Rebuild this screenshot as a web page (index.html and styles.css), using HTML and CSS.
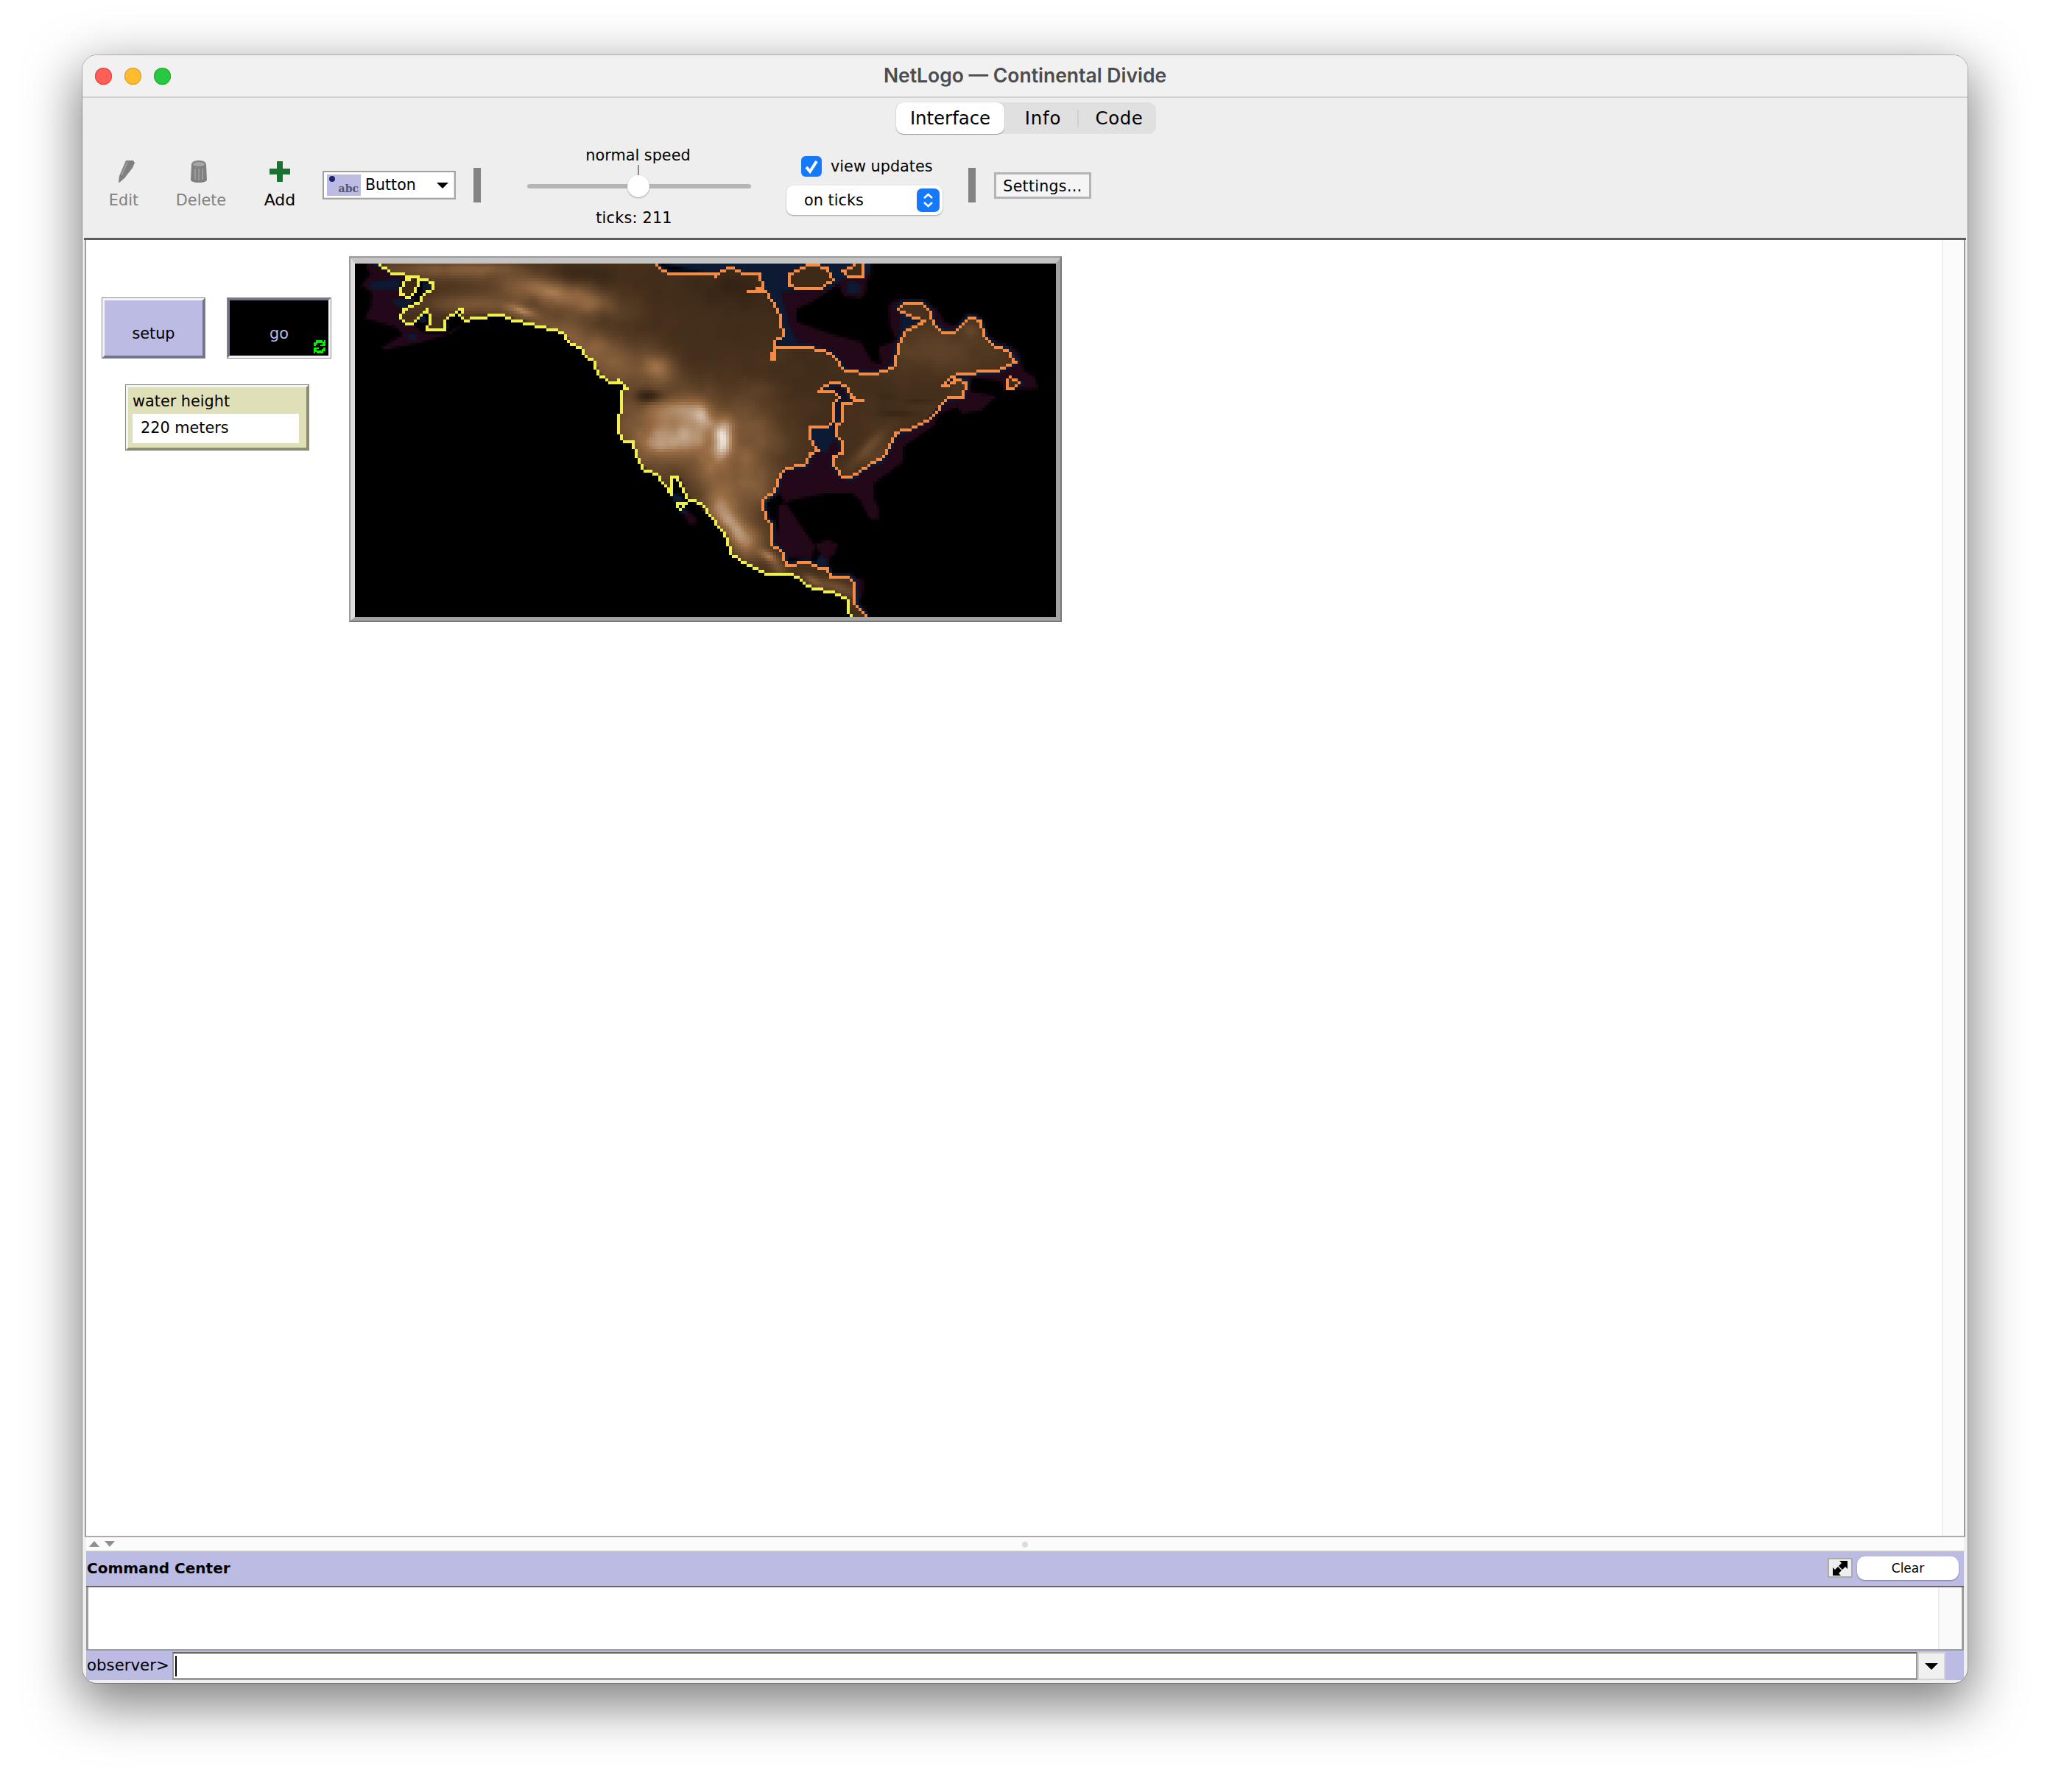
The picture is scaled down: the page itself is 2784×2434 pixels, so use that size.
FILE: index.html
```html
<!DOCTYPE html>
<html lang="en">
<head>
<meta charset="utf-8">
<title>NetLogo — Continental Divide</title>
<link rel="stylesheet" href="styles.css">
</head>
<body>
<div class="window">
  <header class="titlebar">
    <div class="lights"><i class="light red"></i><i class="light yellow"></i><i class="light green"></i></div>
    <div class="title">NetLogo — Continental Divide</div>
  </header>
  <section class="toolbar">
    <div class="tabs">
      <div class="tab active">Interface</div>
      <div class="tab info">Info</div>
      <div class="tab-div"></div>
      <div class="tab code">Code</div>
    </div>
    <div class="tools">
      <div class="tool tool-edit disabled">
        <svg class="tool-icon" width="30" height="31" viewBox="0 0 30 31"><path d="M16 1h10l2 3-3 7-11 14-7 6H6l1-9z" fill="#808080"/><path d="M18 3l-8 18" stroke="#9b9b9b" stroke-width="2" fill="none"/></svg>
        <span class="tool-label">Edit</span>
      </div>
      <div class="tool tool-delete disabled">
        <svg class="tool-icon" width="30" height="31" viewBox="0 0 30 31"><path d="M5 7c0-4 4-6 10-6s10 2 10 6l1 20c0 2-3 4-11 4S4 29 4 27z" fill="#808080"/><ellipse cx="15" cy="6" rx="8" ry="3" fill="#a5a5a5"/><path d="M10 12v15M15 12v16M20 12v15" stroke="#9a9a9a" stroke-width="2"/></svg>
        <span class="tool-label">Delete</span>
      </div>
      <div class="tool tool-add">
        <svg class="tool-icon" width="30" height="31" viewBox="0 0 30 31"><path d="M11 2h8v10h10v8H19v10h-8V20H1v-8h10z" fill="#1b7331"/></svg>
        <span class="tool-label">Add</span>
      </div>
      <div class="widget-select">
        <div class="widget-icon"><i class="widget-dot"></i><span>abc</span></div>
        <span class="widget-name">Button</span>
        <i class="down-arrow"></i>
      </div>
      <div class="sep sep-a"></div>
      <div class="speed">
        <div class="speed-label">normal speed</div>
        <div class="speed-tick"></div>
        <div class="slider"><i class="slider-thumb"></i></div>
        <div class="ticks">ticks: 211</div>
      </div>
      <div class="updates">
        <div class="update-row">
          <span class="check"><svg width="28" height="28" viewBox="0 0 28 28"><path d="M7 15l5 6 9-14" fill="none" stroke="#fff" stroke-width="4"/></svg></span>
          <span>view updates</span>
        </div>
        <div class="update-select">
          <span>on ticks</span>
          <span class="stepper"><svg width="31" height="32" viewBox="0 0 31 32"><path d="M10 13l5.500-5 5.500 5M10 19l5.500 5 5.500-5" fill="none" stroke="#fff" stroke-width="2.500"/></svg></span>
        </div>
      </div>
      <div class="sep sep-b"></div>
      <div class="settings">Settings…</div>
    </div>
  </section>
  <main class="canvas-area">
    <div class="vscroll"></div>
    <div class="widget btn btn-setup">setup</div>
    <div class="widget btn btn-go">go
      <svg class="forever" width="16" height="18" viewBox="0 0 16 18" shape-rendering="crispEdges"><path d="M3 0h9v2h2V0h2v8h-7V6h3V4H5v2H3v2H0V3h3zM0 10h7v2H4v2h7v-2h2v-2h3v5h-3v3H4v-2H2v2H0z" fill="#00f000"/></svg>
    </div>
    <div class="widget monitor">
      <div class="monitor-label">water height</div>
      <div class="monitor-value">220 meters</div>
    </div>
    <div class="widget view"><div class="view-bevel"><canvas id="world" class="world" width="238" height="120"></canvas></div></div>
  </main>
  <div class="splitter">
    <i class="tri tri-up"></i><i class="tri tri-down"></i><i class="split-dot"></i>
  </div>
  <section class="command">
    <div class="cc-head">
      <span class="cc-title">Command Center</span>
      <span class="cc-max"><svg width="20" height="20" viewBox="0 0 20 20"><path d="M9 0h11v11l-3-3-4 4-5-5 4-4zM11 20H0V9l3 3 4-4 5 5-4 4z" fill="#000"/></svg></span>
      <span class="cc-clear">Clear</span>
    </div>
    <div class="cc-output"><div class="cc-scroll"></div></div>
    <div class="cc-input">
      <span class="cc-prompt">observer&gt;</span>
      <div class="cc-field"><i class="caret"></i></div>
      <div class="cc-drop"><i class="down-arrow big"></i></div>
    </div>
  </section>
</div>
<script src="map.js"></script>
</body>
</html>
```
FILE: styles.css
```css
* { box-sizing: border-box; }
html { overflow: hidden; background: #fff; }
body { margin: 0; padding: 0; height: 2434px; font-family: "DejaVu Sans", sans-serif; font-size: 20.8px; color: #000; }
.window {
  margin: 0 112px; top: 75px; height: 2211px; background: #efefef; border-radius: 20px;
  overflow: hidden; display: flex; flex-direction: column; position: relative;
  box-shadow: 0 0 0 1px rgba(0,0,0,.22), 0 24px 70px 6px rgba(0,0,0,.5);
}
.titlebar {
  height: 58px; flex: none; background: #f0f1f0; border-bottom: 2px solid #d2d2d2;
  display: flex; align-items: center; position: relative;
}
.lights { display: flex; gap: 17px; padding-left: 17px; position: absolute; left: 0; top: 17px; }
.light { width: 23px; height: 23px; border-radius: 50%; display: block; }
.red { background: #ff5f57; box-shadow: inset 0 0 0 1px #e2463f; }
.yellow { background: #febc2e; box-shadow: inset 0 0 0 1px #e0a028; }
.green { background: #28c840; box-shadow: inset 0 0 0 1px #1fae34; }
.title { flex: 1; text-align: center; font-family: Inter, sans-serif; font-weight: 600; font-size: 26.5px; color: #4c4c4c; margin-top: -2px; }
.toolbar { height: 193px; flex: none; background: #eee; padding-top: 6px; border-bottom: 3px solid #5d5d5d; margin: 0 2px; }
.tabs {
  margin-left: 1103px; width: 353px; height: 43px; background: #e0e0e0; border-radius: 10px;
  display: flex; align-items: center; font-size: 24.4px; position: relative;
}
.tab { height: 100%; display: flex; align-items: center; justify-content: center; }
.tab.active { width: 147px; background: #fff; border-radius: 10px; box-shadow: 0 1px 1px rgba(0,0,0,.3), 0 0 0 1px rgba(0,0,0,.05); }
.tab.info { width: 99px; letter-spacing: .8px; padding-left: 6px; }
.tab-div { width: 2px; height: 24px; background: #cfcfcf; }
.tab.code { width: 105px; letter-spacing: .6px; padding-left: 5px; }
.tools { display: flex; align-items: flex-start; height: 111px; margin-top: 16px; }
.tool { width: 80px; display: flex; flex-direction: column; align-items: center; margin-top: 20px; }
.tool-edit { margin-left: 14px; }
.tool-delete { margin-left: 25px; }
.tool-add { margin-left: 27px; }
.tool-edit .tool-icon { margin-left: 4px; margin-top: -1px; }
.tool-delete .tool-icon { margin-right: 6px; margin-top: -1px; }
.tool-add .tool-icon { margin-top: -1px; }
.tool-label { line-height: 24px; margin-top: 12px; }
.tool-add .tool-label { font-size: 22px; }
.disabled .tool-label { color: #7f7f7f; }
.widget-select {
  margin: 34px 0 0 18px; width: 181px; height: 39px; background: #fff; display: flex; align-items: center;
  border: 2px solid; border-color: #a0a0a0 #a8a8a8 #a8a8a8 #a0a0a0; box-shadow: inset -1px -1px 0 #ddd; padding-left: 4px;
}
.widget-icon { width: 46px; height: 29px; background: #bcbbe4; position: relative; flex: none; display: flex; align-items: flex-end; justify-content: flex-end; padding: 0 3px 2px 0; }
.widget-icon span { font-family: "DejaVu Serif", serif; font-size: 14px; line-height: 16px; color: #55556d; font-weight: 700; }
.widget-dot { position: absolute; left: 3px; top: 2px; width: 8px; height: 8px; border-radius: 50%; background: #22226e; }
.widget-name { margin-left: 6px; flex: 1; font-size: 20.5px; margin-top: -2px; }
.down-arrow { display: block; width: 0; height: 0; border-left: 8px solid transparent; border-right: 8px solid transparent; border-top: 8px solid #000; margin-right: 8px; }
.down-arrow.big { border-left-width: 9px; border-right-width: 9px; border-top-width: 9px; margin: 0; }
.sep { width: 10px; height: 47px; background: #828282; margin-top: 30px; }
.sep-a { margin-left: 24px; }
.sep-b { margin-left: 35px; }
.speed { width: 304px; margin-left: 63px; display: flex; flex-direction: column; align-items: center; }
.speed-label { line-height: 26px; height: 26px; margin-left: -3px; }
.speed-tick { width: 2px; height: 14px; background: #8a8a8a; margin-left: -3px; }
.slider { width: 304px; height: 6px; margin: 12px 0 12px; background: #b5b5b5; border-radius: 3px; position: relative; }
.slider-thumb { position: absolute; left: 136px; top: -12px; width: 30px; height: 30px; border-radius: 50%; background: #fff; box-shadow: 0 1px 2px rgba(0,0,0,.35); }
.ticks { margin: 15px 0 0 -14px; line-height: 26px; letter-spacing: .2px; }
.updates { width: 212px; margin: 14px 0 0 48px; display: flex; flex-direction: column; }
.update-row { display: flex; align-items: center; height: 28px; margin-left: 20px; gap: 12px; }
.check { width: 28px; height: 28px; background: #1579fb; border-radius: 6px; display: block; }
.check svg, .stepper svg { display: block; }
.update-select {
  margin-top: 12px; height: 40px; background: #fff; border-radius: 9px; box-shadow: 0 1px 2px rgba(0,0,0,.35);
  display: flex; align-items: center; justify-content: space-between; padding: 0 4px 0 24px;
}
.stepper { width: 31px; height: 32px; background: #1579fb; border-radius: 7px; display: block; }
.settings {
  margin: 36px 0 0 25px; width: 132px; height: 36px; border: 3px solid #b4b4b4; background: #f5f5f5; padding-top: 2px;
  display: flex; align-items: center; justify-content: center; font-size: 20.5px; letter-spacing: .3px;
}
.canvas-area { flex: 1; background: #fff; position: relative; margin: 0 3px 0 3px; border-left: 2px solid #9c9c9c; border-right: 2px solid #9c9c9c; border-bottom: 2px solid #ababab; }
.vscroll { position: absolute; right: 0; top: 0; bottom: 0; width: 30px; background: #fbfbfb; border-left: 2px solid #efefef; }
.widget { position: absolute; }
.btn { display: flex; align-items: center; justify-content: center; padding-top: 14px; border: 4px solid; outline: 1px solid #8a8a8a; outline-offset: -1px; top: 78px; height: 83px; }
.btn-setup { left: 21px; width: 141px; background: #bcbbe4; border-color: #f5f5f5 #72728f #72728f #f5f5f5; }
.btn-go { left: 191px; width: 142px; background: #000; color: #bcbbe4; border-color: #72728f #f5f5f5 #f5f5f5 #72728f; }
.forever { position: absolute; right: 4px; bottom: 3px; }
.monitor { left: 53px; top: 196px; width: 250px; height: 90px; background: #e0e0b8; border: 4px solid; border-color: #f5f5f5 #8c8c70 #8c8c70 #f5f5f5; outline: 1px solid #8a8a8a; outline-offset: -1px; padding: 6px 0 0 6px; }
.monitor-label { line-height: 26px; height: 30px; }
.monitor-value { width: 226px; height: 40px; background: #fff; line-height: 38px; padding-left: 11px; }
.view { left: 357px; top: 22px; width: 968px; height: 497px; border: 2px solid; border-color: #999 #777 #777 #999; }
.view-bevel { width: 100%; height: 100%; border-style: solid; border-width: 8px 6px 5px 6px; border-color: #c4c4c4 #a3a3a3 #a3a3a3 #dedede; }
.world { display: block; width: 952px; height: 480px; image-rendering: pixelated; background: #000; }
.splitter { height: 19px; flex: none; background: #fbfbfb; margin: 0 5px; position: relative; border-bottom: 1px solid #ddd; }
.tri { position: absolute; top: 5px; left: 4px; width: 0; height: 0; border-left: 7px solid transparent; border-right: 7px solid transparent; border-bottom: 8px solid #8f8f8f; }
.tri-down { left: 25px; border-bottom: 0; border-top: 8px solid #8f8f8f; }
.split-dot { position: absolute; left: 1271px; top: 6px; width: 8px; height: 8px; border-radius: 50%; background: #dcdcdc; }
.command { flex: none; height: 175px; margin: 0 5px 4px; display: flex; flex-direction: column; background: #bcbbe4; }
.cc-head { height: 49px; flex: none; display: flex; align-items: center; border-bottom: 2px solid #666; padding-bottom: 2px; }
.cc-title { font-weight: 700; font-size: 20px; margin-left: 1px; flex: 1; }
.cc-max { width: 34px; height: 27px; background: #eee; border: 2px solid #aaa; display: flex; align-items: center; justify-content: center; }
.cc-clear { width: 138px; height: 32px; margin: 0 7px 0 6px; background: #fff; border-radius: 11px; box-shadow: 0 1px 2px rgba(60,60,90,.5); display: flex; align-items: center; justify-content: center; font-size: 17px; }
.cc-output { height: 86px; flex: none; background: #fff; border: solid #9c9c9c; border-width: 0 3px 2px 3px; position: relative; }
.cc-scroll { position: absolute; right: 2px; top: 0; bottom: 0; width: 30px; background: #fafafa; border-left: 2px solid #efefef; }
.cc-input { flex: 1; display: flex; margin-top: 2px; }
.cc-prompt { width: 116px; flex: none; line-height: 36px; font-size: 21.3px; margin-left: 1px; white-space: nowrap; }
.cc-field { flex: 1; background: #fff; border: solid #999; border-width: 2px 2px 3px 2px; border-top-color: #666; padding: 3px 0 0 2px; }
.caret { display: block; width: 2px; height: 28px; background: #000; }
.cc-drop { width: 38px; background: #f0f0f0; border: 2px solid #d2d2d2; display: flex; align-items: center; justify-content: center; margin-right: 25px; }
```
FILE: map.js
```js
(function () {
  var c = document.getElementById('world');
  var ctx = c.getContext('2d');
  var W = c.width, H = c.height;
  var NAVY = '#0c1b33', PURPLE = '#220818', ORANGE = '#f58a42', YELLOW = '#eff04e';
  function pt(p) { return [(p[0] / 3 - 22) / 4, (p[1] / 3 - 18) / 4]; }
  function east(list) { return list.map(function (p) { return [p[0] + 1500, p[1]]; }); }

  var yellow = [[165,55],[215,95],[310,108],[335,125],[385,130],[385,160],[350,175],[320,215],[265,245],[250,270],[270,298],[305,298],[345,250],[360,235],[370,275],[365,322],[430,322],[435,285],[490,245],[505,240],[495,265],[510,290],[555,270],[660,265],[725,285],[785,295],[810,312],[870,318],[915,340],[950,380],[985,395],[1005,430],[1045,460],[1060,500],[1100,540],[1140,545],[1140,525],[1180,565],[1150,570],[1150,660],[1140,670],[1140,745],[1160,780],[1195,780],[1215,845],[1250,895],[1300,915],[1350,990],[1360,985],[1355,925],[1385,925],[1430,1020],[1470,1035],[1555,1135]]
    .concat(east([[60,1140],[85,1170],[95,1240],[140,1270],[210,1305],[240,1320],[350,1320],[390,1350],[430,1380],[510,1395],[575,1430],[575,1460],[590,1492]]));
  var orange = [[1290,55],[1320,85],[1350,97],[1535,97],[1540,110]].concat(east([[40,100],[95,70],[160,90],[215,100],[230,150],[165,165],[235,170],[285,240],[305,280],[315,345],[275,370],[265,445],[290,395],[410,395],[465,410],[515,430],[565,495],[660,505],[730,495],[765,465],[780,380],[810,320],[890,285],[860,272],[820,268],[780,235],[800,215],[880,215],[915,255],[920,300],[965,330],[1010,335],[1070,270],[1110,285],[1130,350],[1175,395],[1225,405],[1260,450],[1225,470],[1190,490],[1020,505],[985,525],[955,550],[1005,545],[1010,525],[1060,535],[1040,595],[980,600],[895,690],[815,730],[770,745],[745,800],[710,855],[655,875],[590,925],[555,920],[515,875],[520,845],[555,830],[550,785],[525,755],[530,705],[550,690],[550,625],[630,615],[585,605],[570,565],[540,540],[500,540],[460,570],[510,575],[540,600],[515,620],[515,690],[490,715],[425,720],[420,770],[455,810],[425,825],[400,875],[320,885],[295,915],[280,985],[230,1025],[240,1095],[265,1110],[265,1195],[310,1235],[325,1280],[410,1270],[450,1295],[490,1295],[500,1330],[580,1330],[600,1350],[605,1440],[650,1492]]));
  var yIslands = [
    [[300,108],[325,125],[315,170],[290,190],[250,180],[265,130],[300,108]],
    [[1380,1030],[1415,1030],[1395,1060],[1375,1040],[1380,1030]]
  ];
  var oIslands = [
    east([[340,100],[420,60],[495,70],[515,120],[465,155],[380,155],[340,140],[340,100]]),
    east([[640,55],[635,105],[580,105],[555,80],[600,55]]),
    east([[1235,515],[1275,540],[1250,565],[1225,560],[1225,525],[1235,515]])
  ];
  var purple = [[1500,55]].concat(east([[670,55],[670,100],[650,125],[650,165],[630,195],[560,190],[545,165],[535,140],[430,210],[365,240],[365,290],[500,340],[630,375],[670,450],[710,465],[700,395],[770,365],[745,300],[740,225],[770,200],[880,205],[940,240],[970,295],[1020,310],[1060,260],[1110,265],[1150,350],[1270,410],[1290,490],[1335,515],[1350,565],[1210,570],[1195,535],[1080,520],[1075,575],[1180,595],[1120,650],[1040,665],[1020,640],[940,670],[930,710],[800,800],[800,860],[680,950],[680,1010],[700,1050],[700,1095],[665,1095],[620,1015],[590,990],[490,990],[340,1020],[290,1040],[290,1130],[270,1180],[320,1250],[430,1255],[440,1200],[490,1180],[535,1200],[520,1240],[500,1250],[500,1330],[590,1330],[640,1345],[635,1400],[620,1440],[600,1440],[300,1000],[0,600],[-100,200]]));
  var purpleW = [[115,55],[170,55],[300,110],[300,300],[345,335],[440,340],[520,290],[460,340],[340,375],[190,405],[175,395],[260,345],[235,315],[105,275],[130,230],[135,175],[90,140],[130,100],[115,75]];
  var purpleS = [[1420,1060],[1455,1090],[1455,1115],[1430,1120],[1400,1070]];
  var navy = [
    [[1310,55],[1500,55]].concat(east([[670,55],[655,100],[550,120],[500,160],[300,170],[335,300],[365,370],[420,395],[300,395],[200,200],[215,100],[0,90]])),
    east([[575,125],[620,135],[630,165],[600,180],[570,170]]),
    east([[430,720],[510,710],[520,770],[500,800],[480,830],[440,800]]),
    east([[440,1290],[460,1240],[490,1260],[490,1290]]),
    east([[1250,520],[1300,540],[1260,560]]),
    east([[800,240],[850,270],[830,310],[790,340],[790,280]])
  ];
  var navySpots = [
    [[130,130],[250,115],[255,160],[130,160]],
    [[210,205],[320,195],[270,240],[245,230]],
    [[340,130],[385,135],[385,160],[345,170]],
    [[320,270],[355,265],[360,295],[325,290]],
    [[285,340],[315,340],[315,365],[285,365]],
    [[135,55],[170,55],[200,90],[160,70]],
    [[1360,990],[1400,1000],[1420,1070],[1395,1075],[1365,1020]],
    [[420,300],[450,300],[435,340]]
  ];

  function poly(g, pts, close) {
    g.beginPath();
    pts.forEach(function (p, i) {
      var q = pt(p);
      if (i) g.lineTo(q[0], q[1]); else g.moveTo(q[0], q[1]);
    });
    if (close) g.closePath();
  }
  function fill(g, pts, color) { poly(g, pts, true); g.fillStyle = color; g.fill(); }

  ctx.fillStyle = '#000';
  ctx.fillRect(0, 0, W, H);
  fill(ctx, purple, PURPLE);
  fill(ctx, purpleW, PURPLE);
  fill(ctx, purpleS, PURPLE);

  poly(ctx, orange, false);
  ctx.strokeStyle = NAVY;
  ctx.lineWidth = 2.4;
  ctx.lineJoin = 'round';
  ctx.stroke();
  navy.forEach(function (n) { fill(ctx, n, NAVY); });

  /* elevation field: gaussian hills + value noise, coloured by a ramp */
  var hills = [
    [450,75,300,40,0,.22],[600,65,150,25,0,.12],[980,90,150,40,0,-.1],
    [520,215,160,40,0,.2],[800,150,160,50,.1,.22],[950,190,200,60,.2,.26],[1050,210,80,40,0,.1],
    [880,330,280,70,.4,.22],[740,240,60,18,.3,.3],
    [1100,450,200,90,.7,.18],[1290,460,90,60,.6,.3],[1260,590,55,28,0,-.34],
    [1350,730,230,150,0,.44],[1420,760,100,90,0,.12],[1400,640,90,45,0,.16],[1480,660,40,50,0,.24],[1300,790,60,35,0,.12],
    [1510,880,70,70,0,.16],[1562,770,38,75,0,.5],
    [1680,800,120,220,0,.24],[1620,980,130,90,0,.18],
    [1540,1030,60,80,-.3,.28],[1600,1120,80,50,.8,.38],[1660,1180,80,70,.8,.32],
    [1745,1240,40,20,.5,.36],[1785,1290,40,25,.7,.18],[1925,1340,40,18,.5,.25],[2030,1370,90,24,.3,.2],
    [2450,400,260,90,0,.1],[2570,320,34,30,0,.12],[2200,830,60,40,-.6,.08],[2150,800,110,24,-.8,.15],
    [2270,660,70,12,0,-.1],[2360,610,50,10,0,-.1],[2230,590,30,12,0,-.06],
    [1550,140,200,90,0,-.06],[1700,200,250,130,0,-.06],[1950,500,200,120,0,-.03]
  ].map(function (h) {
    var q = pt([h[0], h[1]]);
    return { x: q[0], y: q[1], rx: h[2] / 12, ry: h[3] / 12, cos: Math.cos(h[4]), sin: Math.sin(h[4]), a: h[5] };
  });
  var ramp = [[0,40,27,15],[.2,70,48,28],[.4,111,78,48],[.6,154,110,70],[.8,201,173,147],[1,255,255,255]];
  function hash(i, j) {
    var s = Math.sin(i * 127.1 + j * 311.7) * 43758.5453;
    return s - Math.floor(s);
  }
  function noise(x, y) {
    var i = Math.floor(x), j = Math.floor(y), u = x - i, v = y - j;
    u = u * u * (3 - 2 * u); v = v * v * (3 - 2 * v);
    var a = hash(i, j), b = hash(i + 1, j), d = hash(i, j + 1), e = hash(i + 1, j + 1);
    return (a + (b - a) * u + (d - a) * v + (a - b - d + e) * u * v) - .5;
  }
  var off = document.createElement('canvas');
  off.width = W; off.height = H;
  var t = off.getContext('2d');
  var img = t.createImageData(W, H);
  for (var y = 0; y < H; y++) {
    for (var x = 0; x < W; x++) {
      var v = .2, gain = .03;
      for (var k = 0; k < hills.length; k++) {
        var h = hills[k], dx = x - h.x, dy = y - h.y;
        var px = dx * h.cos + dy * h.sin, py = -dx * h.sin + dy * h.cos;
        var g = Math.exp(-(px * px) / (h.rx * h.rx) - (py * py) / (h.ry * h.ry));
        v += h.a * g;
        gain += Math.abs(h.a) * g * .2;
      }
      v += (noise(x / 6, y / 6) * 1.2 + noise(x / 3 + 40, y / 3) * .5) * Math.min(gain, .12);
      v = Math.max(0, Math.min(1, v));
      var r = 1;
      while (ramp[r][0] < v && r < ramp.length - 1) r++;
      var a0 = ramp[r - 1], a1 = ramp[r], f = (v - a0[0]) / (a1[0] - a0[0]);
      var o = (y * W + x) * 4;
      img.data[o] = a0[1] + (a1[1] - a0[1]) * f;
      img.data[o + 1] = a0[2] + (a1[2] - a0[2]) * f;
      img.data[o + 2] = a0[3] + (a1[3] - a0[3]) * f;
      img.data[o + 3] = 255;
    }
  }
  t.putImageData(img, 0, 0);
  t.globalCompositeOperation = 'destination-in';
  var land = [[1290,40],[165,40]].concat(yellow).concat([[2150,1520]]).concat(orange.slice().reverse());
  fill(t, land, '#000');
  ctx.drawImage(off, 0, 0);

  var isl = document.createElement('canvas');
  isl.width = W; isl.height = H;
  var ig = isl.getContext('2d');
  ig.fillStyle = '#3f2a18';
  ig.fillRect(0, 0, W, H);
  ig.globalCompositeOperation = 'destination-in';
  ig.beginPath();
  oIslands.concat(yIslands).forEach(function (s) {
    s.forEach(function (p, i) {
      var q = pt(p);
      if (i) ig.lineTo(q[0], q[1]); else ig.moveTo(q[0], q[1]);
    });
    ig.closePath();
  });
  ig.fill();
  ctx.drawImage(isl, 0, 0);

  navySpots.forEach(function (n) { fill(ctx, n, NAVY); });

  function line(a, b) {
    var x0 = Math.floor(a[0]), y0 = Math.floor(a[1]), x1 = Math.floor(b[0]), y1 = Math.floor(b[1]);
    var dx = Math.abs(x1 - x0), dy = Math.abs(y1 - y0);
    var sx = x0 < x1 ? 1 : -1, sy = y0 < y1 ? 1 : -1, err = dx - dy;
    while (true) {
      ctx.fillRect(x0, y0, 1, 1);
      if (x0 === x1 && y0 === y1) break;
      var e = 2 * err;
      if (e > -dy) { err -= dy; x0 += sx; }
      if (e < dx) { err += dx; y0 += sy; }
    }
  }
  function trace(pts, color) {
    ctx.fillStyle = color;
    for (var i = 1; i < pts.length; i++) line(pt(pts[i - 1]), pt(pts[i]));
  }
  trace(orange, ORANGE);
  oIslands.forEach(function (s) { trace(s, ORANGE); });
  var q = pt([1765, 420]);
  ctx.fillRect(Math.floor(q[0]), Math.floor(q[1]), 2, 3);
  trace(yellow, YELLOW);
  yIslands.forEach(function (s) { trace(s, YELLOW); });
})();
```
